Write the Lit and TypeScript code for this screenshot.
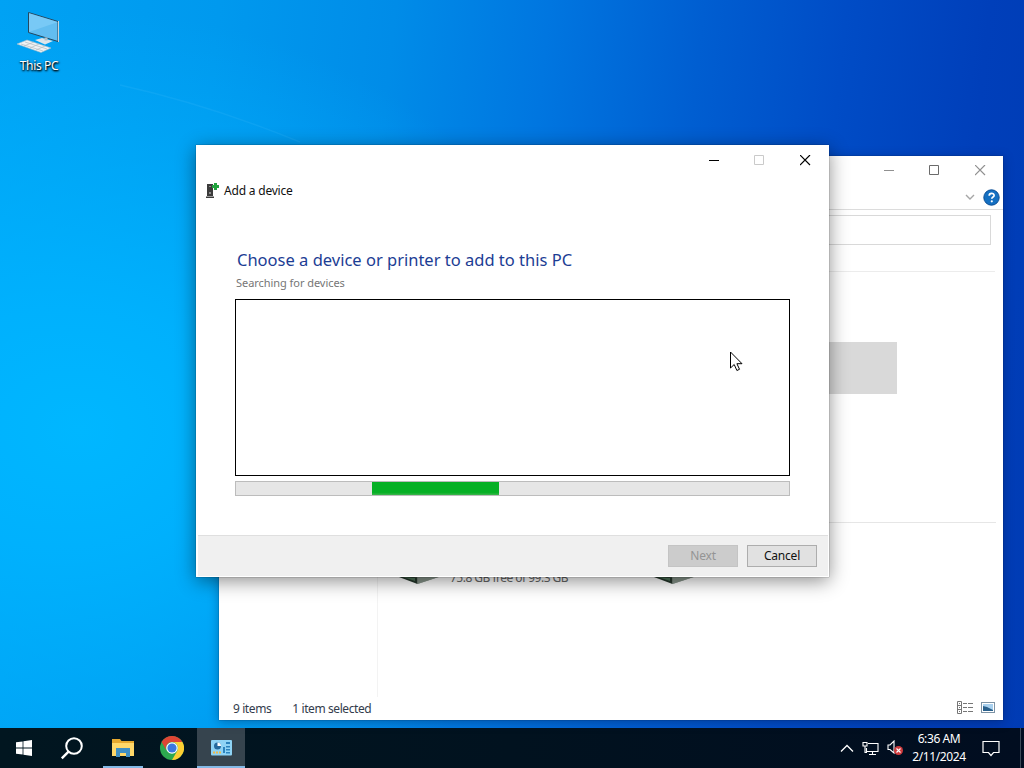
import { html, svg, LitElement, css, CSSResultGroup, TemplateResult } from "lit";
import { customElement, property } from "lit/decorators.js";
import { classMap } from "lit/directives/class-map.js";
import { styleMap } from "lit/directives/style-map.js";

/** Minimize / maximize / close glyphs at the right of a title bar. */
@customElement("window-controls")
export class WindowControls extends LitElement {

  /** Colour of the minimize and close glyphs. */
  @property({ type: String })
  color: string = "#000";

  /** Colour of the maximize glyph. */
  @property({ type: String })
  maxColor: string = "#000";

  static get styles(): CSSResultGroup {
    return css`
      :host { display: flex; }
      .control {
        width: 45.5px;
        height: 30px;
        display: flex;
        align-items: center;
        justify-content: center;
      }
      svg { display: block; }
    `;
  }

  render(): TemplateResult {
    return html`
      <div class="control">
        <svg width="11" height="11" stroke=${this.color}><path d="M0 5.5h10" /></svg>
      </div>
      <div class="control">
        <svg width="11" height="11" fill="none" stroke=${this.maxColor}><path d="M.5.5h9v9h-9z" /></svg>
      </div>
      <div class="control">
        <svg width="11" height="11" stroke=${this.color} stroke-width="1.200"><path d="M0 0l10 10M10 0L0 10" /></svg>
      </div>`;
  }
}

/** File Explorer window, mostly covered by the wizard. */
@customElement("explorer-window")
export class ExplorerWindow extends LitElement {

  static get styles(): CSSResultGroup {
    return css`
      :host {
        display: flex;
        flex-direction: column;
        background: #fff;
        color: #333c4c;
        font-size: 12px;
        box-shadow: 0 0 1px rgba(0, 20, 50, .7), 0 2px 10px rgba(0, 20, 60, .35);
      }
      svg { display: block; }
      .titlebar { display: flex; justify-content: flex-end; align-items: flex-end; height: 29px; }
      .ribbon {
        display: flex;
        justify-content: flex-end;
        align-items: center;
        gap: 8px;
        height: 24px;
        padding-right: 3px;
        border-bottom: 1px solid #dcdcdc;
      }
      .address {
        display: flex;
        height: 62px;
        margin-right: 8px;
        padding: 5px 12px 26px 10px;
        box-sizing: border-box;
        border-bottom: 1px solid #ececec;
      }
      .address-box { flex: 1; border: 1px solid #d9d9d9; margin-right: -8px; }
      .body { display: flex; flex: 1; }
      .nav { width: 158px; border-right: 1px solid #f3f3f3; }
      .content { flex: 1; padding: 70px 7px 0 10px; }
      .tiles { display: grid; grid-template-columns: repeat(2, 254px); gap: 1px; }
      .tile { height: 52px; display: flex; align-items: flex-end; }
      .tile.selected { grid-column: 2; background: #d9d9d9; }
      .separator { margin: 128px 0 13px; height: 1px; background: #e6e6e6; }
      .drive { display: flex; gap: 7px; padding-left: 7px; }
      .drive-info { letter-spacing: -.52px; line-height: 16px; color: #666; margin-bottom: 2px; }
      .status {
        display: flex;
        align-items: center;
        height: 22px;
        padding: 0 8px 1px 14px;
        gap: 21px;
      }
      .view-modes { display: flex; align-items: center; gap: 8px; height: 20px; margin-left: auto; padding-bottom: 1px; }
      .count { letter-spacing: -.41px; padding-top: 1px; }
    `;
  }

  private driveIcon(): TemplateResult {
    return html`
      <svg width="48" height="40" viewBox="0 0 48 40">
        <path d="M2 20l16-10 28 10v8.300L22.500 36z" fill="#9ba69e" />
        <path d="M2 28.300l20.500 1V36z" fill="#26382c" />
        <path d="M22.500 29L46 28.300 22.500 36z" fill="#87948a" />
        <path d="M8 29l12 4v-3z" fill="#4d7358" />
      </svg>`;
  }

  render(): TemplateResult {
    return html`
      <div class="titlebar"><window-controls color="#909090" .maxColor=${"#6b6b6b"}></window-controls></div>
      <div class="ribbon">
        <svg width="10" height="8" fill="none" stroke="#a6a6a6" stroke-width="1.400"><path d="M1 2l4 4 4-4" /></svg>
        <svg width="17" height="17" viewBox="0 0 17 17">
          <circle cx="8.500" cy="8.500" r="7.700" fill="#1470c2" stroke="#0a4d94" />
          <path d="M6.200 6.700c0-3.200 4.900-3 4.900-.3 0 1.600-2.300 1.600-2.300 3.300" fill="none" stroke="#fff" stroke-width="1.700" />
          <circle cx="8.800" cy="12.300" r="1.100" fill="#fff" />
        </svg>
      </div>
      <div class="address"><div class="address-box"></div></div>
      <div class="body">
        <div class="nav"></div>
        <div class="content">
          <div class="tiles"><div class="tile selected"></div></div>
          <div class="separator"></div>
          <div class="tiles">
            <div class="tile drive">${this.driveIcon()}<span class="drive-info">75.8 GB free of 99.3 GB</span></div>
            <div class="tile drive">${this.driveIcon()}</div>
          </div>
        </div>
      </div>
      <div class="status">
        <span class="count">9 items</span>
        <span class="count">1 item selected</span>
        <div class="view-modes">
          <svg width="16" height="13" fill="none" stroke="#767676">
            <path d="M.5.500h4v12h-4zM.5 4.500h4M.5 8.500h4" />
            <path d="M2 2.500h1M2 6.500h1M2 10.500h1M6 2.500h4m1 0h5M6 6.500h4m1 0h5M6 10.500h4m1 0h5" />
          </svg>
          <svg width="14" height="11">
            <rect x=".5" y=".5" width="13" height="10" fill="#fff" stroke="#7d93a5" />
            <rect x="2" y="2" width="10" height="7" fill="#a8d0ee" />
            <path d="M2 4l4 1 6 3v1H2z" fill="#28608c" />
          </svg>
        </div>
      </div>`;
  }
}

/** "Add a device" wizard. */
@customElement("device-wizard")
export class DeviceWizard extends LitElement {

  /** Left edge of the marquee chunk, in percent of the track. */
  @property({ type: Number })
  start: number = 24.6;

  /** Width of the marquee chunk, in percent of the track. */
  @property({ type: Number })
  chunk: number = 22.97;

  static get styles(): CSSResultGroup {
    return css`
      :host {
        display: flex;
        flex-direction: column;
        background: #fff;
        color: #111;
        font-size: 12px;
        box-shadow: 0 0 1px rgba(0, 0, 0, .6), 0 4px 18px rgba(0, 0, 0, .45);
      }
      svg { display: block; }
      .titlebar { display: flex; justify-content: flex-end; height: 30px; padding-right: 1px; }
      .header { display: flex; align-items: center; gap: 5px; height: 30px; padding-left: 9px; }
      .title { letter-spacing: -.2px; }
      .page { flex: 1; padding: 42px 39px 0; }
      h1 {
        margin: 0 0 0 2px;
        font-size: 16.5px;
        font-weight: 400;
        line-height: 26px;
        color: #1c3d94;
      }
      .searching {
        height: 21px;
        margin: 0 0 5px 1px;
        padding-top: 2px;
        box-sizing: border-box;
        font-size: 11px;
        line-height: 16px;
        letter-spacing: -.05px;
        color: #767676;
      }
      .list { height: 175px; border: 1px solid #000; margin-bottom: 5px; }
      .progress { height: 13px; border: 1px solid #bcbcbc; background: #e6e6e6; }
      .bar { height: 100%; background: linear-gradient(#06b025 80%, #3cb54c); }
      .footer {
        display: flex;
        justify-content: flex-end;
        gap: 9px;
        height: 41px;
        box-sizing: border-box;
        margin: 0 1px 1px 2px;
        padding: 9px 11px 0 0;
        background: #f0f0f0;
        border-top: 1px solid #dfdfdf;
      }
      button {
        width: 70px;
        height: 22px;
        padding: 0;
        border: 1px solid #adadad;
        background: #e1e1e1;
        color: #111;
        font: inherit;
        line-height: 18px;
        letter-spacing: -.2px;
      }
      button:disabled { background: #ccc; border-color: #c4c4c4; color: #949494; }
    `;
  }

  render(): TemplateResult {
    const barStyle = {
      marginLeft: `${this.start}%`,
      width: `${this.chunk}%`
    };

    return html`
      <div class="titlebar"><window-controls .maxColor=${"#cacaca"}></window-controls></div>
      <div class="header">
        <svg width="14" height="17" viewBox="0 0 14 17">
          <path d="M2 2h6v12H2zM1 14.500h8V16H1z" fill="#3b3b3b" />
          <path d="M4 4h2v1H4zM4 10h2v2H4z" fill="#8b8b8b" />
          <path d="M9 1h3v2h2v3h-2v2H9V6H7V3h2z" fill="#22a33e" />
        </svg>
        <span class="title">Add a device</span>
      </div>
      <div class="page">
        <h1>Choose a device or printer to add to this PC</h1>
        <div class="searching">Searching for devices</div>
        <div class="list"></div>
        <div class="progress"><div class="bar" style=${styleMap(barStyle)}></div></div>
      </div>
      <div class="footer">
        <button disabled>Next</button>
        <button>Cancel</button>
      </div>`;
  }
}

interface TaskbarItem {
  name: string;
  icon: TemplateResult;
  open?: boolean;
  active?: boolean;
}

@customElement("task-bar")
export class TaskBar extends LitElement {

  static get styles(): CSSResultGroup {
    return css`
      :host {
        display: flex;
        justify-content: space-between;
        background: linear-gradient(90deg, #011620, #01121f 50%, #010d20);
        color: #fff;
        font-size: 12px;
      }
      svg { display: block; }
      .items, .tray { display: flex; }
      .item {
        width: 48px;
        height: 40px;
        margin-right: 1.33px;
        display: flex;
        align-items: center;
        justify-content: center;
        box-sizing: border-box;
      }
      .item.open {
        background: linear-gradient(#83b9e6, #83b9e6) center bottom / 40px 2px no-repeat;
      }
      .item.active {
        background: linear-gradient(#83b9e6, #83b9e6) center bottom / 48px 2px no-repeat, #36444e;
      }
      .tray { align-items: center; }
      .tray-icons { display: flex; align-items: center; gap: 8px; margin-right: 9px; }
      .clock { width: 54px; text-align: center; line-height: 18px; letter-spacing: -.4px; white-space: nowrap; }
      .notifications { margin: 0 20px 0 16px; }
      .peek { width: 3px; height: 40px; border-left: 1px solid #3c4a58; }
    `;
  }

  private items: TaskbarItem[] = [
    {
      name: "start",
      icon: svg`<svg width="16" height="16" fill="#fff">
        <path d="M0 2.300L6.600 1.400v6.200H0zM7.400 1.300L16 0v7.600H7.400zM0 8.400h6.600v6.200L0 13.700zM7.400 8.400H16V16l-8.600-1.200z" /></svg>`
    },
    {
      name: "search",
      icon: svg`<svg width="26" height="24" fill="none" stroke="#fff" stroke-width="2">
        <circle cx="14" cy="10" r="7.800" /><path d="M8.500 15.700L1.800 22.400" stroke-width="2.400" /></svg>`
    },
    {
      name: "explorer",
      open: true,
      icon: svg`<svg width="22" height="20">
        <path d="M0 1h8l1.500 2H22v15H0z" fill="#e6a92f" />
        <path d="M0 5h22v13H0z" fill="#ffd869" />
        <path d="M4 10h14v9h-4v-4H8v4H4z" fill="#3f8fc4" /></svg>`
    },
    {
      name: "chrome",
      icon: svg`<svg width="24" height="24" viewBox="0 0 24 24">
        <circle cx="12" cy="12" r="12" fill="#2da94f" />
        <path d="M1.600 6A12 12 0 0 1 22.400 6H12a6 6 0 0 0-5.200 9z" fill="#dd4535" />
        <path d="M22.400 6A12 12 0 0 1 12 24l5.200-9A6 6 0 0 0 12 6z" fill="#fdcf33" />
        <circle cx="12" cy="12" r="5.800" fill="#fff" />
        <circle cx="12" cy="12" r="4.600" fill="#3b78e0" /></svg>`
    },
    {
      name: "control-panel",
      active: true,
      icon: svg`<svg width="21" height="16">
        <rect width="21" height="15.500" rx="1" fill="#8ed3f5" />
        <circle cx="6.500" cy="6" r="3.500" fill="#24699d" />
        <path d="M6.500 6V2.500A3.500 3.500 0 0 1 10 6z" fill="#fff" />
        <path d="M2 12.500h8" stroke="#f0b94a" stroke-width="2" stroke-dasharray="2 1" />
        <path d="M12 7h2v6h-2zM15 2h4v2h-4zM15 6h4v1.500h-4zM15 9h4v1.500h-4zM15 12h4v1.500h-4z" fill="#2c83bd" /></svg>`
    }
  ];

  render(): TemplateResult {
    return html`
      <div class="items">
        ${this.items.map(item => html`
          <div class=${classMap({ item: true, open: !!item.open, active: !!item.active })}>${item.icon}</div>`)}
      </div>
      <div class="tray">
        <div class="tray-icons">
          <svg width="14" height="9" fill="none" stroke="#fff" stroke-width="1.300"><path d="M1 7.500l6-6 6 6" /></svg>
          <svg width="17" height="15" fill="none" stroke="#fff" stroke-width="1.100">
            <path d="M6 2.500h10v8H4.500V7M10.500 10.500v3M7 13.500h7M1 1.500h4v3.500H1zM3 5v6.500h2" />
          </svg>
          <svg width="16" height="16" fill="none" stroke="#fff" stroke-width="1.100">
            <path d="M1 5h2l4-4v12L3 9.500H1z" />
            <circle cx="11.500" cy="10.500" r="4.500" fill="#cf3b3d" stroke="none" />
            <path d="M9.500 8.500l4 4m0-4l-4 4" />
          </svg>
        </div>
        <div class="clock">6:36 AM<br />2/11/2024</div>
        <svg class="notifications" width="18" height="17" fill="none" stroke="#fff" stroke-width="1.200">
          <path d="M1 1.500h16v11h-5.500L9 15.500l-2.500-3H1z" />
        </svg>
        <div class="peek"></div>
      </div>`;
  }
}

@customElement("app-root")
export class AppRoot extends LitElement {

  static get styles(): CSSResultGroup {
    return css`
      :host {
        display: flex;
        flex-direction: column;
        position: relative;
        width: 1024px;
        height: 768px;
        overflow: hidden;
        font-family: "Noto Sans", "Open Sans", sans-serif;
      }
      .desktop {
        position: relative;
        flex: 1;
        background:
          radial-gradient(ellipse 520px 420px at 80px 430px, #00b7ff 0%, rgba(0, 180, 255, .85) 30%, rgba(0, 165, 250, 0) 100%),
          linear-gradient(96deg, #00a2f4 0%, #0099ee 20%, #008ce8 36%, #0076e0 50%, #005ed1 64%, #004cc6 77%, #003fba 90%, #003bb4 100%);
      }
      .beam { position: absolute; left: 0; top: 60px; }
      .shortcut {
        position: absolute;
        left: 1px;
        top: 10px;
        width: 76px;
        display: flex;
        flex-direction: column;
        align-items: center;
        gap: 4px;
        color: #fff;
        font-size: 12px;
        line-height: 16px;
        letter-spacing: -.35px;
        text-shadow: 1px 1px 2px #000, 0 1px 2px #000;
      }
      explorer-window { position: absolute; left: 219px; top: 156px; width: 784px; height: 564px; }
      device-wizard { position: absolute; left: 196px; top: 145px; width: 633px; height: 432px; }
      .cursor { position: absolute; left: 730px; top: 351px; }
      task-bar { height: 40px; }
    `;
  }

  render(): TemplateResult {
    return html`
      <div class="desktop">
        <svg class="beam" width="400" height="100">
          <path d="M120 25Q210 45 300 82" fill="none" stroke="#5cc8ff" stroke-opacity=".13" stroke-width="1.500" />
        </svg>
        <div class="shortcut">
          <svg width="44" height="44" viewBox="0 0 44 44">
            <path d="M11.500 2.500L41 11.500v20l-29.500-9z" fill="#62bdf0" stroke="#24475f" />
            <path d="M12 3l29 9-29 10z" fill="#9bdcff" fill-opacity=".4" />
            <path d="M41.500 11v21" stroke="#c9d3d9" />
            <path d="M18 30l7-2 11 3-8 3.500z" fill="#dde5ea" />
            <path d="M29 27.500v3" stroke="#b5c2ca" stroke-width="3" />
            <path d="M0 34l10-4 24 8-10 4.500z" fill="#eef2f4" stroke="#a5bccb" stroke-width=".6" />
            <path d="M4 34l22 7M8 32l22 7M7 36l10-4M13 38l9-4M19 40l9-4" stroke="#b2bcc2" stroke-width=".7" />
          </svg>
          <span>This PC</span>
        </div>
        <explorer-window></explorer-window>
        <device-wizard></device-wizard>
        <svg class="cursor" width="14" height="22">
          <path d="M.5 1v16l3.700-3.500 2.700 6 2.600-1.200-2.600-5.600H12z" fill="#fff" stroke="#000" />
        </svg>
      </div>
      <task-bar></task-bar>`;
  }
}
